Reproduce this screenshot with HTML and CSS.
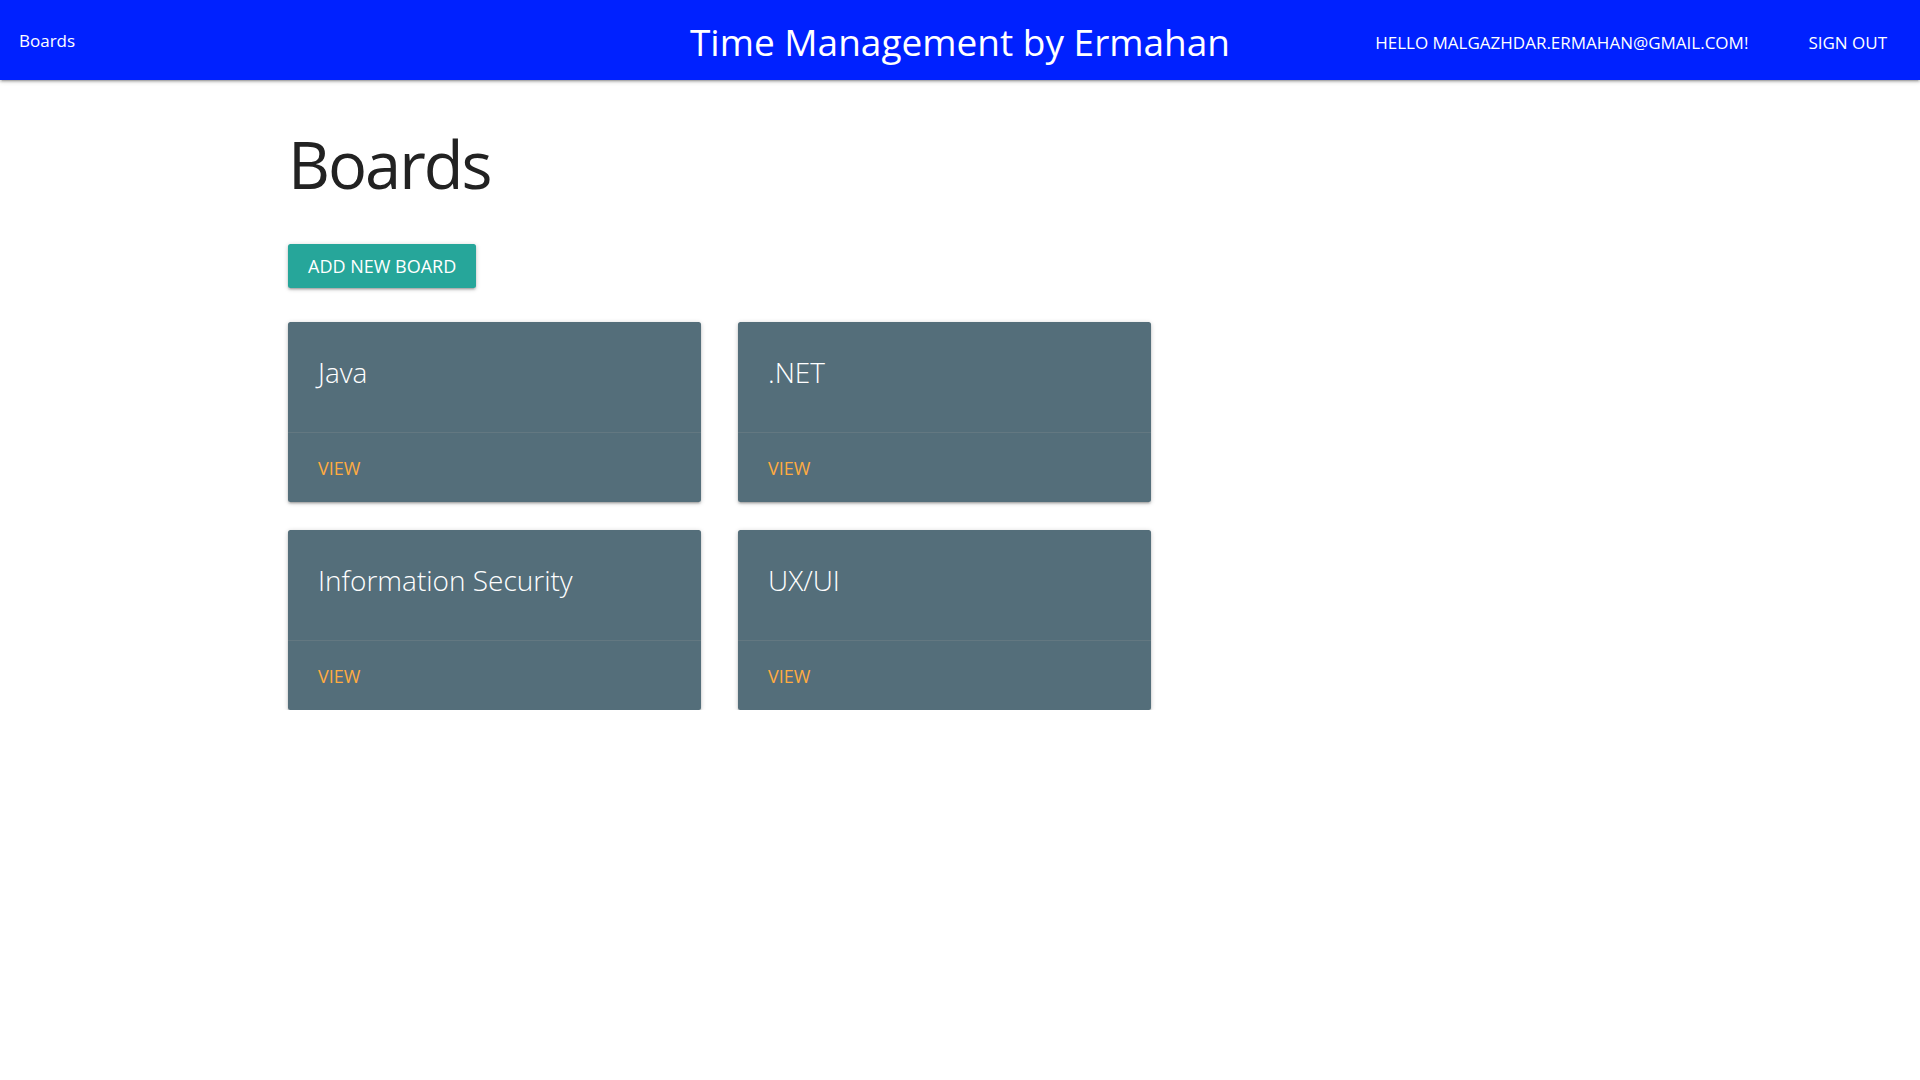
FILE: index.html
```html
<!DOCTYPE html>
<html lang="en">
<head>
<meta charset="utf-8">
<title>Time Management by Ermahan</title>
<link rel="stylesheet" href="styles.css">
</head>
<body>
<nav class="navbar">
  <div class="nav-left"><a class="nav-link" href="#">Boards</a></div>
  <a class="brand" href="#">Time Management by Ermahan</a>
  <ul class="nav-right">
    <li><a class="nav-link upper" href="#">Hello malgazhdar.ermahan@gmail.com!</a></li>
    <li><a class="nav-link upper" href="#">Sign out</a></li>
  </ul>
</nav>
<main class="container">
  <h1 class="page-title">Boards</h1>
  <a class="btn" href="#">Add new board</a>
  <div class="board-grid">
    <div class="card">
      <div class="card-content"><span class="card-title">Java</span></div>
      <div class="card-action"><a href="#">View</a></div>
    </div>
    <div class="card">
      <div class="card-content"><span class="card-title">.NET</span></div>
      <div class="card-action"><a href="#">View</a></div>
    </div>
    <div class="card">
      <div class="card-content"><span class="card-title">Information Security</span></div>
      <div class="card-action"><a href="#">View</a></div>
    </div>
    <div class="card">
      <div class="card-content"><span class="card-title">UX/UI</span></div>
      <div class="card-action"><a href="#">View</a></div>
    </div>
  </div>
</main>
</body>
</html>
```
FILE: styles.css
```css
* { box-sizing: border-box; }
html, body { margin: 0; padding: 0; }
body {
  font-family: "Open Sans", "Noto Sans", sans-serif;
  color: rgba(0, 0, 0, 0.87);
  background: #fff;
}
a { text-decoration: none; }

.navbar {
  height: 80px;
  background: #0021ff;
  display: grid;
  grid-template-columns: 1fr auto 1fr;
  align-items: center;
  box-shadow: 0 2px 2px 0 rgba(0,0,0,.14), 0 3px 1px -2px rgba(0,0,0,.12), 0 1px 5px 0 rgba(0,0,0,.2);
}
.nav-left { padding-left: 19px; }
.nav-link {
  color: #fff;
  font-size: 17px;
}
.upper { text-transform: uppercase; }
.brand {
  color: #fff;
  font-size: 37px;
  margin-top: 3px;
}
.nav-right {
  list-style: none;
  margin: 4px 0 0;
  padding: 0 33px 0 0;
  display: flex;
  justify-content: flex-end;
  gap: 60px;
}

.container {
  width: 1344px;
  margin: 0 auto;
}
.page-title {
  font-weight: 400;
  font-size: 65px;
  letter-spacing: -2px;
  line-height: 84px;
  margin: 42px 0 38px;
  color: #222;
}
.btn {
  display: inline-flex;
  align-items: center;
  height: 44px;
  padding: 0 20px;
  background: #26a69a;
  color: #fff;
  font-size: 18px;
  text-transform: uppercase;
  border-radius: 2.5px;
  box-shadow: 0 2px 2px 0 rgba(0,0,0,.14), 0 3px 1px -2px rgba(0,0,0,.12), 0 1px 5px 0 rgba(0,0,0,.2);
}
.board-grid {
  margin-top: 34px;
  display: grid;
  grid-template-columns: 413px 413px;
  column-gap: 37px;
  row-gap: 28px;
}
.card {
  background: #546e7a;
  border-radius: 2.5px;
  box-shadow: 0 2px 2px 0 rgba(0,0,0,.14), 0 3px 1px -2px rgba(0,0,0,.12), 0 1px 5px 0 rgba(0,0,0,.2);
}
.card-content { padding: 30px 30px 30px; }
.card-title {
  display: block;
  color: #fff;
  font-size: 28px;
  font-weight: 300;
  line-height: 40px;
  margin-bottom: 10px;
}
.card-action {
  border-top: 1px solid rgba(160,160,160,0.2);
  padding: 21px 30px 18px;
  line-height: 29px;
}
.card-action a {
  color: #ffab40;
  font-size: 18px;
  text-transform: uppercase;
}
```
